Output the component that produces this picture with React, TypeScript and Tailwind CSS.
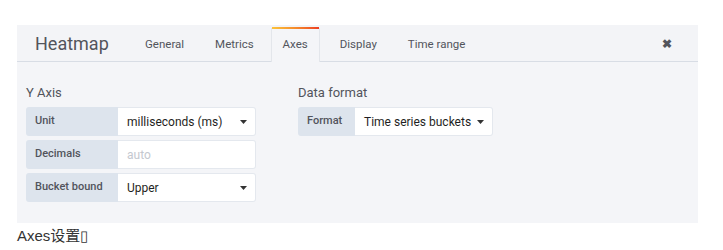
function Caret() {
  return (
    <svg width="7" height="4" viewBox="0 0 7 4" className="shrink-0 text-[#333]">
      <path d="M0 0h7L3.5 4z" fill="currentColor" />
    </svg>
  );
}

function Row({ label, value, placeholder, select, labelW = 'w-[92px]', valueW = 'w-[138px]' }: {
  label: string;
  value?: string;
  placeholder?: string;
  select?: boolean;
  labelW?: string;
  valueW?: string;
}) {
  return (
    <div className="flex h-[29px]">
      <div className={`${labelW} flex items-center rounded-l-[3px] bg-[#dde4ed] pl-[9px] text-[11px] font-medium text-[#52545c]`}>
        {label}
      </div>
      <div className={`${valueW} flex items-center justify-between gap-[6px] whitespace-nowrap rounded-r-[3px] border border-l-0 border-[#e4e8ee] bg-white pl-[9px] pr-[8px] text-[12px]`}>
        {value ? (
          <span className="text-[#1f1f23]">{value}</span>
        ) : (
          <span className="text-[#c4c8cf]">{placeholder}</span>
        )}
        {select && <Caret />}
      </div>
    </div>
  );
}

export default function App() {
  return (
    <div className="h-[250px] w-[723px] bg-white pt-[25px] font-['Roboto','Liberation_Sans',sans-serif]">
      <div className="ml-[17px] w-[681px] bg-[#f4f5f8]">
        <div className="flex h-[37px] items-end border-b border-[#d8dde5] bg-[#f3f4f7]">
          <div className="mb-[8px] ml-[18px] w-[110px] text-[18px] leading-none text-[#52545c]">Heatmap</div>
          <div className="flex h-[33px] text-[11.5px] text-[#52545c]">
            <div className="flex items-center">General</div>
            <div className="ml-[31px] flex items-center">Metrics</div>
            <div className="relative -mb-px ml-[17px] flex w-[49px] items-center justify-center border-x border-[#e3e6eb] bg-[#f4f5f8]">
              <span className="absolute -top-px left-0 right-0 h-[2px] bg-gradient-to-r from-[#fbc33b] via-[#f58b2c] to-[#ec3b24]" />
              Axes
            </div>
            <div className="ml-[20px] flex items-center">Display</div>
            <div className="ml-[31px] flex items-center">Time range</div>
          </div>
          <div className="mb-[11px] ml-auto mr-[26px] text-[12px] font-bold leading-none text-[#52545c]">✖</div>
        </div>
        <div className="flex px-[9px] pb-[21px] pt-[22px]">
          <div className="w-[272px]">
            <div className="mb-[6px] text-[13px] leading-[17px] text-[#52545c]">Y Axis</div>
            <div className="flex flex-col gap-[4px]">
              <Row label="Unit" value="milliseconds (ms)" select />
              <Row label="Decimals" placeholder="auto" />
              <Row label="Bucket bound" value="Upper" select />
            </div>
          </div>
          <div>
            <div className="mb-[6px] text-[13px] leading-[17px] text-[#52545c]">Data format</div>
            <Row label="Format" value="Time series buckets" select labelW="w-[57px]" valueW="w-[138px]" />
          </div>
        </div>
      </div>
      <div className="ml-[17px] mt-[2px] font-['Liberation_Sans','Noto_Sans_CJK_SC',sans-serif] text-[15px] text-[#333]">Axes设置▯</div>
    </div>
  );
}
